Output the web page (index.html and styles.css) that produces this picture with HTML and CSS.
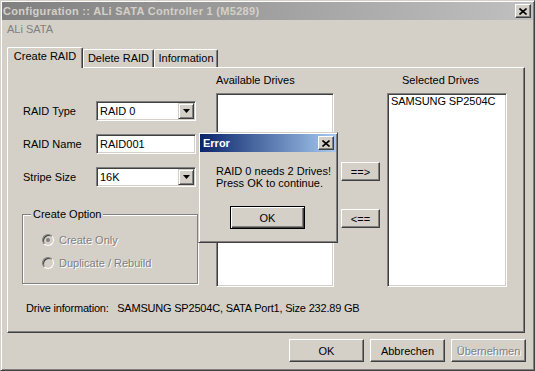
FILE: index.html
```html
<!DOCTYPE html>
<html lang="de">
<head>
    <meta charset="UTF-8">
    <title>Configuration :: ALi SATA Controller 1 (M5289)</title>
    <link rel="stylesheet" href="styles.css">
</head>
<body>
    <div class="window">
        <div class="titlebar">
            <span>Configuration :: ALi SATA Controller 1 (M5289)</span>
            <span class="close-btn">
                <svg width="8" height="7" viewBox="0 0 8 7"><path d="M0.5 0.5L7.5 6.5M7.5 0.5L0.5 6.5" stroke="#000" stroke-width="1.6"/></svg>
            </span>
        </div>
        <div class="content">
            <div class="subtitle">ALi SATA</div>
            <div class="tabs">
                <div class="tab active" style="width: 76px">Create RAID</div>
                <div class="tab" style="width: 71px">Delete RAID</div>
                <div class="tab" style="width: 64px">Information</div>
            </div>
            <div class="panel">
                <div class="drives">
                    <div class="form-col">
                        <div class="field first">
                            <label>RAID Type</label>
                            <div class="combo">
                                <span class="value">RAID 0</span>
                                <span class="arrow"><svg width="7" height="4" viewBox="0 0 7 4"><path d="M0 0H7L3.5 4Z"/></svg></span>
                            </div>
                        </div>
                        <div class="field">
                            <label>RAID Name</label>
                            <div class="combo"><span class="value">RAID001</span></div>
                        </div>
                        <div class="field">
                            <label>Stripe Size</label>
                            <div class="combo">
                                <span class="value">16K</span>
                                <span class="arrow"><svg width="7" height="4" viewBox="0 0 7 4"><path d="M0 0H7L3.5 4Z"/></svg></span>
                            </div>
                        </div>
                        <fieldset class="group">
                            <legend>Create Option</legend>
                            <div class="radios">
                                <div class="radio"><span class="dot checked"></span>Create Only</div>
                                <div class="radio"><span class="dot"></span>Duplicate / Rebuild</div>
                            </div>
                        </fieldset>
                    </div>
                    <div class="list-col available">
                        <div class="col-label">Available Drives</div>
                        <div class="listbox"></div>
                    </div>
                    <div class="move-col">
                        <button class="btn move-btn">==&gt;</button>
                        <button class="btn move-btn second">&lt;==</button>
                    </div>
                    <div class="list-col selected">
                        <div class="col-label">Selected Drives</div>
                        <div class="listbox">
                            <div class="item">SAMSUNG SP2504C</div>
                        </div>
                    </div>
                </div>
                <div class="drive-info">Drive information:&nbsp;&nbsp; SAMSUNG SP2504C, SATA Port1, Size 232.89 GB</div>
            </div>
            <div class="actions">
                <button class="btn action-btn">OK</button>
                <button class="btn action-btn">Abbrechen</button>
                <button class="btn action-btn" disabled>Übernehmen</button>
            </div>
        </div>

        <!-- modal error box over the dialog -->
        <div class="dialog">
            <div class="dialog-title">
                <span>Error</span>
                <span class="close-btn">
                    <svg width="8" height="7" viewBox="0 0 8 7"><path d="M0.5 0.5L7.5 6.5M7.5 0.5L0.5 6.5" stroke="#000" stroke-width="1.6"/></svg>
                </span>
            </div>
            <div class="message">RAID 0 needs 2 Drives!<br>Press OK to continue.</div>
            <button class="btn default-btn">OK</button>
        </div>
    </div>
</body>
</html>
```

FILE: styles.css
```css
/* Win2000 style dialog */
* {
    box-sizing: border-box;
}

body {
    margin: 0;
    font-family: "Liberation Sans", Arial, sans-serif;
    font-size: 11px;
    color: #000;
    background-color: #d4d0c8;
}

.window {
    position: relative;
    width: 535px;
    height: 371px;
    padding: 1px;
    background-color: #d4d0c8;
    border: 1px solid;
    border-color: #d4d0c8 #404040 #404040 #d4d0c8;
    box-shadow: inset 1px 1px #fff, inset -1px -1px #808080;
}

.titlebar {
    display: flex;
    align-items: center;
    justify-content: space-between;
    height: 18px;
    padding: 0 2px 0 1px;
    background: linear-gradient(to right, #808080, #c0c0c0);
    color: #d4d0c8;
    font-weight: bold;
    letter-spacing: 0.3px;
}

.close-btn {
    display: flex;
    align-items: center;
    justify-content: center;
    width: 16px;
    height: 14px;
    background-color: #d4d0c8;
    border: 1px solid;
    border-color: #fff #404040 #404040 #fff;
    box-shadow: inset -1px -1px #808080;
}

.content {
    padding: 0 8px 0 5px;
}

.subtitle {
    margin-top: 3px;
    line-height: 13px;
    color: #808080;
}

.tabs {
    display: flex;
    align-items: flex-end;
    height: 20px;
    margin-top: 11px;
}

.tab {
    height: 18px;
    line-height: 16px;
    text-align: center;
    background-color: #d4d0c8;
    border-top: 1px solid #fff;
    border-left: 1px solid #fff;
    border-right: 1px solid #404040;
    border-radius: 2px 2px 0 0;
    box-shadow: inset -1px 0 #808080;
}

.tab.active {
    position: relative;
    z-index: 1;
    height: 21px;
    line-height: 17px;
    margin-bottom: -1px;
}

.panel {
    height: 266px;
    padding: 6px 0 0 14px;
    border: 1px solid;
    border-color: #fff #404040 #404040 #fff;
    box-shadow: inset -1px -1px #808080;
}

.drives {
    display: flex;
    align-items: flex-start;
}

.form-col {
    width: 176px;
    margin-right: 18px;
}

.field {
    display: flex;
    align-items: center;
    height: 20px;
    margin-top: 13px;
}

.field.first {
    margin-top: 27px;
}

.field label {
    width: 74px;
    padding-left: 1px;
}

.combo {
    display: flex;
    align-items: center;
    width: 100px;
    height: 20px;
    background-color: #fff;
    border: 1px solid;
    border-color: #808080 #fff #fff #808080;
    box-shadow: inset 1px 1px #404040, inset -1px -1px #d4d0c8;
    padding: 1px 1px 1px 3px;
}

.combo .value {
    flex: 1;
}

.arrow {
    display: flex;
    align-items: center;
    justify-content: center;
    width: 16px;
    height: 16px;
    background-color: #d4d0c8;
    border: 1px solid;
    border-color: #d4d0c8 #404040 #404040 #d4d0c8;
    box-shadow: inset 1px 1px #fff, inset -1px -1px #808080;
}

.group {
    margin: 21px 0 0 0;
    padding: 0;
    height: 76px;
    border: 1px solid #808080;
    box-shadow: 1px 1px #fff, inset 1px 1px #fff;
}

.group legend {
    margin-left: 8px;
    padding: 0 2px;
    line-height: 13px;
    background-color: #d4d0c8;
}

.radios {
    padding: 11px 0 0 19px;
}

.radio {
    display: flex;
    align-items: center;
    height: 16px;
    margin-bottom: 7px;
    color: #808080;
    text-shadow: 1px 1px #fff;
}

.dot {
    position: relative;
    width: 12px;
    height: 12px;
    margin-right: 5px;
    border-radius: 50%;
    border: 1px solid;
    border-color: #808080 #fff #fff #808080;
    box-shadow: inset 1px 1px #404040;
    background-color: #d4d0c8;
}

.dot.checked::after {
    content: "";
    position: absolute;
    left: 3px;
    top: 3px;
    width: 4px;
    height: 4px;
    border-radius: 50%;
    background-color: #808080;
}

.list-col.available {
    width: 118px;
    margin-right: 7px;
}

.list-col.selected {
    width: 120px;
}

.col-label {
    height: 13px;
    line-height: 13px;
    margin-bottom: 6px;
}

.selected .col-label {
    padding-left: 15px;
}

.listbox {
    height: 194px;
    padding: 0 2px;
    line-height: 13px;
    background-color: #fff;
    border: 1px solid;
    border-color: #808080 #fff #fff #808080;
    box-shadow: inset 1px 1px #404040, inset -1px -1px #d4d0c8;
}

.item {
    padding: 1px 1px 0 1px;
    letter-spacing: -0.1px;
}

.move-col {
    display: flex;
    flex-direction: column;
    width: 39px;
    margin-right: 7px;
}

.btn {
    font-family: inherit;
    font-size: 11px;
    color: #000;
    background-color: #d4d0c8;
    border: 1px solid;
    border-color: #fff #404040 #404040 #fff;
    box-shadow: inset -1px -1px #808080;
    padding: 0;
}

.btn:disabled {
    color: #808080;
    text-shadow: 1px 1px #fff;
}

.move-btn {
    height: 19px;
    margin-top: 88px;
}

.move-btn.second {
    margin-top: 28px;
}

.drive-info {
    margin-top: 15px;
    padding-left: 4px;
    line-height: 13px;
    letter-spacing: -0.2px;
}

.actions {
    display: flex;
    justify-content: flex-end;
    gap: 6px;
    margin-top: 6px;
    margin-right: -1px;
}

.action-btn {
    width: 75px;
    height: 23px;
}

.dialog {
    position: absolute;
    left: 197px;
    top: 131px;
    width: 140px;
    height: 111px;
    padding: 1px;
    background-color: #d4d0c8;
    border: 1px solid;
    border-color: #d4d0c8 #404040 #404040 #d4d0c8;
    box-shadow: inset 1px 1px #fff, inset -1px -1px #808080;
}

.dialog-title {
    display: flex;
    align-items: center;
    justify-content: space-between;
    height: 18px;
    padding: 0 2px 0 3px;
    background: linear-gradient(to right, #0a246a, #a6caf0);
    color: #fff;
    font-weight: bold;
}

.message {
    padding: 13px 0 0 16px;
    line-height: 12px;
}

.default-btn {
    display: block;
    width: 75px;
    height: 23px;
    margin: 17px 0 0 30px;
    border: 1px solid #000;
    box-shadow: inset 1px 1px #fff, inset -1px -1px #404040, inset -2px -2px #808080;
}
```
